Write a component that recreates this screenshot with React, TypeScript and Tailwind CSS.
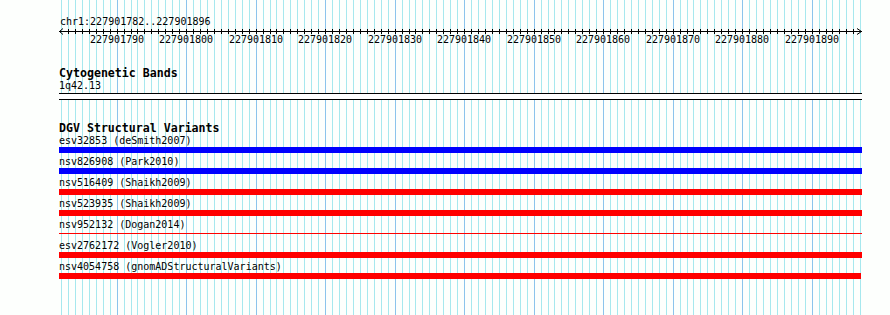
import React from 'react';

// base positions -> pixel columns of the guide lines
const X0 = 61;
const PPB = 6.95;
const cols = Array.from({ length: 116 }, (_, k) => Math.round(X0 + k * PPB));
const labels = [790, 800, 810, 820, 830, 840, 850, 860, 870, 880, 890];

const variants = [
  { name: 'esv32853 (deSmith2007)', kind: 'blue' },
  { name: 'nsv826908 (Park2010)', kind: 'blue' },
  { name: 'nsv516409 (Shaikh2009)', kind: 'red' },
  { name: 'nsv523935 (Shaikh2009)', kind: 'red' },
  { name: 'nsv952132 (Dogan2014)', kind: 'thin' },
  { name: 'esv2762172 (Vogler2010)', kind: 'red' },
  { name: 'nsv4054758 (gnomADStructuralVariants)', kind: 'redShort' },
];

const GuideLines = () => (
  <svg width="890" height="315" className="absolute inset-0 pointer-events-none" shapeRendering="crispEdges">
    {cols.map((x, k) => (
      <line
        key={k}
        x1={x + 0.5}
        x2={x + 0.5}
        y1={0}
        y2={315}
        stroke={k % 10 === 8 ? '#8cc4ec' : '#a6e8ee'}
        strokeWidth={1}
      />
    ))}
  </svg>
);

const Ruler = () => (
  <svg width="803" height="20" className="block" shapeRendering="crispEdges">
    <line x1={0} x2={803} y1={3.5} y2={3.5} stroke="#000" />
    <polyline points="4,0.5 0.5,3.5 4,6.5" fill="none" stroke="#000" shapeRendering="auto" />
    <polyline points="798,0.5 802.5,3.5 798,6.5" fill="none" stroke="#000" shapeRendering="auto" />
    {cols.slice(1, 115).map((x, k) => (
      <line key={k} x1={x - 59 + 0.5} x2={x - 59 + 0.5} y1={1} y2={6} stroke="#000" />
    ))}
    {labels.map((b) => {
      const x = cols[b - 782] - 59;
      return (
        <text
          key={b}
          x={x}
          y={15}
          textAnchor="middle"
          fontSize={10}
          fill="#000"
          fontFamily="'DejaVu Sans Mono', monospace"
        >
          {227901000 + b}
        </text>
      );
    })}
  </svg>
);

const Bar = ({ kind }: { kind: string }) => {
  if (kind === 'thin') {
    return (
      <div className="h-[6px] pt-[2px]">
        <div className="h-px w-[803px] bg-[#ff0000]" />
      </div>
    );
  }
  if (kind === 'blue') return <div className="h-[6px] w-[803px] bg-[#0000ff]" />;
  if (kind === 'redShort') return <div className="h-[6px] w-[802px] bg-[#ff0000]" />;
  return <div className="h-[6px] w-[803px] bg-[#ff0000]" />;
};

export default function App() {
  return (
    <div className="relative w-[890px] h-[315px] overflow-hidden bg-[#fdfffd] text-black font-['DejaVu_Sans_Mono',monospace]">
      <GuideLines />
      <div className="relative flex flex-col pl-[59px] pt-[16px] w-[862px]">
        <div className="text-[10px] leading-[12px] pl-px">chr1:227901782..227901896</div>
        <Ruler />

        <div className="mt-[19px] text-[11.6px] leading-[13px] font-bold">Cytogenetic Bands</div>
        <div className="text-[10px] leading-[12px]">1q42.13</div>
        <div className="mt-px h-[7px] w-[803px] border-y border-black bg-white" />

        <div className="mt-[22px] text-[11.6px] leading-[13px] font-bold">DGV Structural Variants</div>
        <div className="flex flex-col">
          {variants.map((v, i) => (
            <div key={i} className="h-[21px] flex flex-col">
              <div className="text-[10px] leading-[12px] whitespace-nowrap">{v.name}</div>
              <Bar kind={v.kind} />
            </div>
          ))}
        </div>
      </div>
    </div>
  );
}
